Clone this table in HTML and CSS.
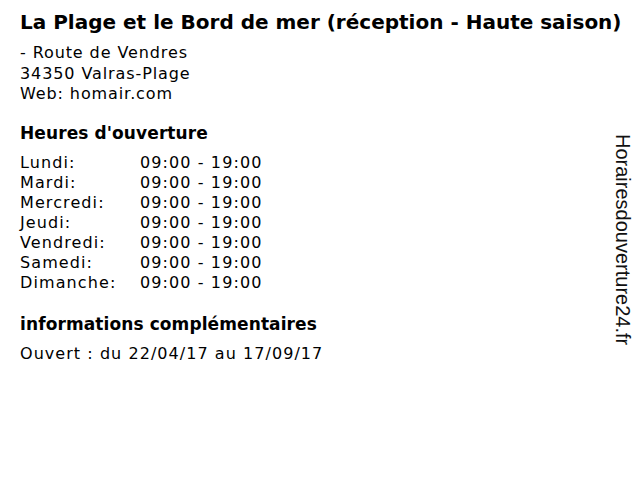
FILE: index.html
```html
<!DOCTYPE html>
<html lang="fr">
<head>
<meta charset="utf-8">
<title>La Plage et le Bord de mer</title>
<link rel="stylesheet" href="styles.css">
</head>
<body>
<div class="page">
  <main class="main">
    <h1 class="title">La Plage et le Bord de mer (réception - Haute saison)</h1>
    <div class="address">
      <div>- Route de Vendres</div>
      <div>34350 Valras-Plage</div>
      <div>Web: homair.com</div>
    </div>
    <h2 class="heading">Heures d'ouverture</h2>
    <div class="hours">
      <span class="day">Lundi:</span><span class="time">09:00 - 19:00</span>
      <span class="day">Mardi:</span><span class="time">09:00 - 19:00</span>
      <span class="day">Mercredi:</span><span class="time">09:00 - 19:00</span>
      <span class="day">Jeudi:</span><span class="time">09:00 - 19:00</span>
      <span class="day">Vendredi:</span><span class="time">09:00 - 19:00</span>
      <span class="day">Samedi:</span><span class="time">09:00 - 19:00</span>
      <span class="day">Dimanche:</span><span class="time">09:00 - 19:00</span>
    </div>
    <h2 class="heading heading-info">informations complémentaires</h2>
    <p class="info">Ouvert : du 22/04/17 au 17/09/17</p>
  </main>
  <aside class="side">Horairesdouverture24.fr</aside>
</div>
</body>
</html>
```
FILE: styles.css
```css
html, body {
  margin: 0;
  padding: 0;
  background: #fff;
}
body {
  color: #000;
  font-family: "DejaVu Sans", Verdana, sans-serif;
}
.page {
  display: flex;
  width: 640px;
  height: 480px;
}
.main {
  flex: 1 1 0;
  min-width: 0;
  padding-left: 20px;
  padding-top: 10px;
}
.title {
  margin: 0;
  font-size: 20px;
  font-weight: bold;
  line-height: 24px;
  white-space: nowrap;
}
.address {
  margin-top: 9px;
  font-size: 16px;
  letter-spacing: 0.9px;
  line-height: 20.5px;
}
.heading {
  margin: 18.5px 0 0;
  font-size: 17px;
  font-weight: bold;
  letter-spacing: 0.1px;
  line-height: 20px;
}
.heading-info {
  margin-top: 21px;
}
.hours {
  margin-top: 10px;
  display: grid;
  grid-template-columns: 120px auto;
  font-size: 16px;
  letter-spacing: 1.1px;
  line-height: 20px;
}
.info {
  margin: 10px 0 0;
  font-size: 16px;
  letter-spacing: 1.05px;
  line-height: 20px;
}
.side {
  flex: none;
  writing-mode: vertical-rl;
  font-family: "Liberation Sans", Arial, sans-serif;
  font-size: 20px;
  color: #111;
  margin-top: 134px;
  margin-right: 6px;
  align-self: flex-start;
  line-height: 22px;
}
```
